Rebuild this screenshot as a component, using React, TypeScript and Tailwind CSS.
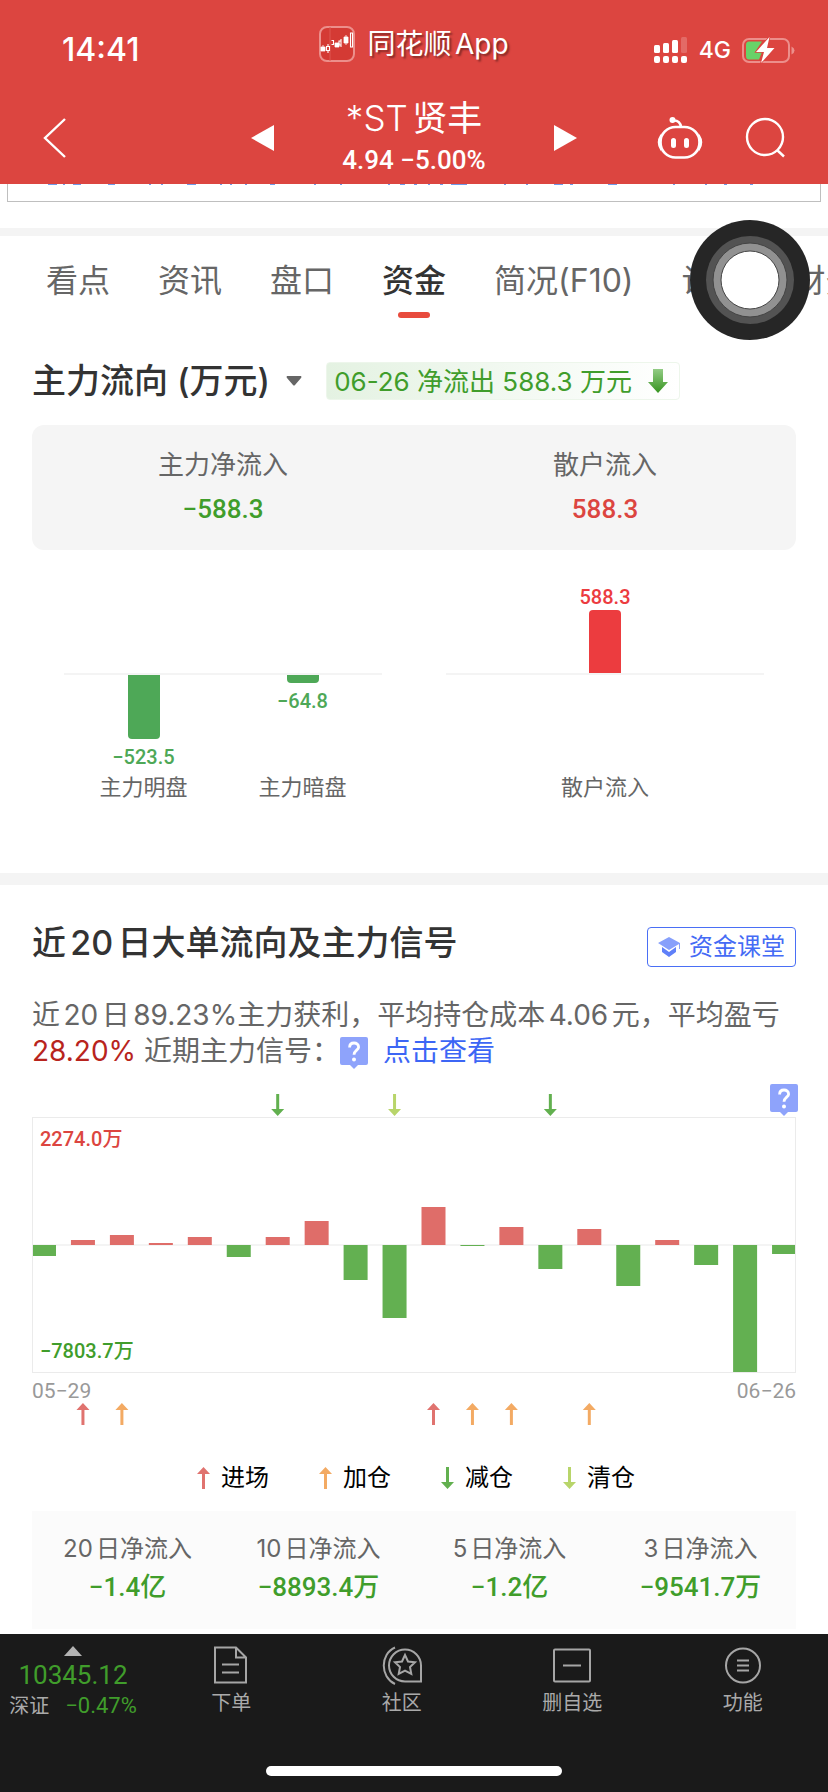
import React from "react";

const CJK = "font-['Inter','Noto_Sans_CJK_SC',sans-serif]";
const DIN = "font-['Roboto','Noto_Sans_CJK_SC',sans-serif]";

const tabs = ["看点", "资讯", "盘口", "资金", "简况(F10)", "诊股", "财务"];

const flow = [-11, 5, 10, 2, 8, -12, 8, 24, -35, -73, 38, -1, 18, -24, 16, -41, 5, -20, -127, -9];

const RED = "#e0736f";
const ORANGE = "#f3aa63";
const GREEN = "#62b04f";
const LIME = "#b8d56a";

const topSignals = [
  { day: 6, color: GREEN },
  { day: 9, color: LIME },
  { day: 13, color: GREEN },
];
const bottomSignals = [
  { day: 1, color: RED },
  { day: 2, color: ORANGE },
  { day: 10, color: RED },
  { day: 11, color: ORANGE },
  { day: 12, color: ORANGE },
  { day: 14, color: ORANGE },
];

const legend = [
  { label: "进场", color: RED, up: true },
  { label: "加仓", color: ORANGE, up: true },
  { label: "减仓", color: GREEN, up: false },
  { label: "清仓", color: LIME, up: false },
];

const totals = [
  { label: "20日净流入", value: "−1.4亿" },
  { label: "10日净流入", value: "−8893.4万" },
  { label: "5日净流入", value: "−1.2亿" },
  { label: "3日净流入", value: "−9541.7万" },
];

const UP = "M0 7 L6.5 0 L13 7 H8 V22 H5 V7 Z";
const DOWN = "M0 15 L6.5 22 L13 15 H8 V0 H5 V15 Z";

function Arrow({ up, color }: { up: boolean; color: string }) {
  return (
    <svg width="13" height="22" viewBox="0 0 13 22" aria-hidden="true">
      <path d={up ? UP : DOWN} fill={color} />
    </svg>
  );
}

function SignalRow({ items, up }: { items: { day: number; color: string }[]; up: boolean }) {
  return (
    <svg className="block h-[22px] w-full" viewBox="0 0 764 22" aria-hidden="true">
      {items.map((s) => (
        <path key={s.day} d={up ? UP : DOWN} fill={s.color} transform={`translate(${5.5 + s.day * 38.95} 0)`} />
      ))}
    </svg>
  );
}

function Hint({ className = "" }: { className?: string }) {
  return (
    <button type="button" aria-label="说明" className={`inline-block h-8 w-7 ${className}`}>
      <svg width="28" height="32" viewBox="0 0 28 32" aria-hidden="true">
        <path d="M2 0H26Q28 0 28 2V26Q28 28 26 28H18L14 32L10 28H2Q0 28 0 26V2Q0 0 2 0Z" fill="#8ea3fb" />
        <path d="M9.6 10.5C9.6 7.6 11.4 6 14 6S18.6 7.6 18.6 10.2C18.6 13 14 13.6 14 17.8" fill="none" stroke="#fff" strokeWidth="2.8" />
        <circle cx="14" cy="22.6" r="2" fill="#fff" />
      </svg>
    </button>
  );
}

function StatusBar() {
  return (
    <div className="grid grid-cols-3 items-center pt-6">
      <div className="pt-2 pl-[62px] text-[32px] leading-9 font-medium">14:41</div>
      <div className="flex items-center justify-center gap-3 pb-1">
        <svg width="36" height="36" viewBox="0 0 36 36" aria-hidden="true">
          <rect x="1" y="1" width="34" height="34" rx="7" fill="#d43a34" stroke="#ec8f8b" strokeWidth="2" />
          <path d="M11 1V35" stroke="#dd5751" />
          <path d="M2 21h4v4H2zM4 19v3M16 17h4v4h-4zM25 11h4v6h-4zM27 9v10" fill="#fff" stroke="#fff" strokeWidth=".8" />
          <path d="M7.500 20.500h3v4h-3zM9 18v2M9 25v2M12.500 14.500h2v4h-2M22 15h-2v4h2M22 13v8M31.500 7v14h2v-14z" fill="none" stroke="#fff" strokeWidth="1.1" />
        </svg>
        <span className="text-[28px] leading-9 whitespace-nowrap [text-autospace:normal] [text-shadow:2px_2px_2px_rgba(0,0,0,0.4)]">同花顺App</span>
      </div>
      <div className="flex items-center justify-end gap-[11px] pt-2 pr-[33px]">
        <svg width="34" height="27" viewBox="0 0 34 27" fill="#fff" aria-hidden="true">
          <rect x="0" y="8" width="6" height="8" rx="1.500" />
          <rect x="9" y="6" width="6" height="10" rx="1.500" />
          <rect x="18" y="3" width="6" height="13" rx="1.500" />
          <rect x="27" y="0" width="6" height="16" rx="1.500" opacity=".2" />
          <rect x="0" y="19" width="6" height="7" rx="2" />
          <rect x="9" y="19" width="6" height="7" rx="2" />
          <rect x="18" y="19" width="6" height="7" rx="2" />
          <rect x="27" y="19" width="6" height="7" rx="2" />
        </svg>
        <span className="text-[23px] leading-8 font-medium">4G</span>
        <svg width="53" height="27" viewBox="0 0 53 27" aria-hidden="true">
          <rect x="1" y="2" width="46" height="23" rx="6" fill="none" stroke="#ec8f8b" strokeWidth="2" />
          <path d="M49.500 9.500Q52.500 11 52.500 13.500T49.500 17.500Z" fill="#ec8f8b" />
          <path d="M7 4.500H20L13 15H20L17 22.500H7Q4 22.500 4 19V8Q4 4.500 7 4.500Z" fill="#68d268" />
          <path d="M27.500 0L14 15H22L19 26L32.500 11H25Z" fill="#fff" stroke="#dc4540" strokeWidth="1.500" paintOrder="stroke" />
        </svg>
      </div>
    </div>
  );
}

function Header() {
  return (
    <header className="h-[184px] bg-[#dc4540] text-white">
      <StatusBar />
      <div className="grid grid-cols-[1fr_auto_1fr] items-center pt-7">
        <button type="button" aria-label="返回" className="ml-[43px] w-6">
          <svg width="24" height="40" viewBox="0 0 24 40" fill="none" stroke="#fff" strokeWidth="2.400" aria-hidden="true">
            <path d="M22 1L2 20L22 39" />
          </svg>
        </button>
        <div className="flex w-[326px] items-center justify-between">
          <button type="button" aria-label="上一只">
            <svg width="23" height="26" viewBox="0 0 23 26" aria-hidden="true"><path d="M0 13L23 0V26Z" fill="#fff" /></svg>
          </button>
          <div className="text-center">
            <h1 className="text-[35px] leading-[44px] whitespace-nowrap [text-autospace:normal]"><span className="font-light">*ST</span>贤丰</h1>
            <p className={`${DIN} text-[26px] leading-10 font-medium whitespace-nowrap`}>4.94 −5.00%</p>
          </div>
          <button type="button" aria-label="下一只">
            <svg width="23" height="26" viewBox="0 0 23 26" aria-hidden="true"><path d="M23 13L0 0V26Z" fill="#fff" /></svg>
          </button>
        </div>
        <div className="flex items-center justify-end gap-[42px] pr-[43px]">
          <button type="button" aria-label="智能助手">
            <svg width="46" height="44" viewBox="0 0 46 44" fill="none" stroke="#fff" strokeWidth="2.600" aria-hidden="true">
              <rect x="3.500" y="11" width="39" height="30.500" rx="15" />
              <path d="M16 4.500Q23 4 24 11" />
              <circle cx="15.500" cy="4" r="3" fill="#fff" stroke="none" />
              <path d="M3.500 20Q-.500 26 3.500 33ZM42.500 20Q46.500 26 42.500 33Z" fill="#fff" strokeWidth="1.500" />
              <path d="M16.500 24.500V29.500M29.500 24.500V29.500" strokeWidth="5" strokeLinecap="round" />
            </svg>
          </button>
          <button type="button" aria-label="搜索">
            <svg width="40" height="42" viewBox="0 0 40 42" fill="none" stroke="#fff" strokeWidth="2.400" aria-hidden="true">
              <circle cx="20" cy="20" r="18" />
              <path d="M32 33L39 39.500" />
            </svg>
          </button>
        </div>
      </div>
    </header>
  );
}

function Tabs() {
  return (
    <nav className="flex gap-12 overflow-hidden pt-5 pl-[46px] text-[32px] leading-[50px] text-[#666]">
      {tabs.map((t) => (
        <a key={t} href="#" className={t === "资金" ? "shrink-0 font-medium text-[#333]" : "shrink-0"}>
          {t}
          <span className={t === "资金" ? "mx-auto mt-[6px] block h-[6px] w-8 rounded-[3px] bg-[#e84b3d]" : "mt-[6px] block h-[6px]"} />
        </a>
      ))}
    </nav>
  );
}

function MainFlow() {
  return (
    <section className="px-8 pt-[39px]">
      <div className="flex items-center">
        <button type="button" className="flex items-center text-[#333]">
          <h2 className="text-[34px] leading-[48px] font-medium whitespace-nowrap [text-autospace:normal]">主力流向 (万元)</h2>
          <svg className="ml-4" width="16" height="10" viewBox="0 0 16 10" aria-hidden="true"><path d="M1 0H15Q16 1 15 2L9 9Q8 10 7 9L1 2Q0 1 1 0Z" fill="#666" /></svg>
        </button>
        <div className="ml-6 flex h-[38px] items-center gap-4 rounded border border-[#edf6eb] bg-linear-to-r from-[#e4f2e2] to-white px-[7px] text-[26px] whitespace-nowrap text-[#409d2b]">
          06-26 净流出 588.3 万元
          <svg className="mr-1" width="20" height="24" viewBox="0 0 20 24" aria-hidden="true">
            <defs>
              <linearGradient id="drop" x1="0" y1="0" x2="0" y2="1">
                <stop offset="0" stopColor="#93cc85" />
                <stop offset="1" stopColor="#36941f" />
              </linearGradient>
            </defs>
            <path d="M5 0H15V13H20L10 24L0 13H5Z" fill="url(#drop)" />
          </svg>
        </div>
      </div>

      <dl className="mt-5 grid h-[125px] grid-cols-2 rounded-xl bg-[#f5f5f5] pt-5 text-center">
        <div>
          <dt className="text-[26px] leading-10 text-[#666]">主力净流入</dt>
          <dd className={`${DIN} mt-1 text-[26px] leading-10 font-medium text-[#409d2b]`}>−588.3</dd>
        </div>
        <div>
          <dt className="text-[26px] leading-10 text-[#666]">散户流入</dt>
          <dd className={`${DIN} mt-1 text-[26px] leading-10 font-medium text-[#dc4540]`}>588.3</dd>
        </div>
      </dl>

      <div className="mt-[34px] grid grid-cols-2 gap-16 px-8 text-center">
        <div className="grid grid-cols-2">
          <FlowBar value="−523.5" label="主力明盘" height={64} />
          <FlowBar value="−64.8" label="主力暗盘" height={8} />
        </div>
        <FlowBar value="588.3" label="散户流入" height={64} positive />
      </div>
    </section>
  );
}

function FlowBar({ value, label, height, positive = false }: { value: string; label: string; height: number; positive?: boolean }) {
  const text = <span className={`${DIN} text-[20px] leading-[26px] font-medium`}>{value}</span>;
  return (
    <div className="text-[#4ea857]">
      <div className="flex h-[91px] flex-col items-center justify-end border-b-2 border-[#f4f4f4] text-[#ec3c3f]">
        {positive && text}
        {positive && <div className="w-8 rounded-t bg-[#ec3c3f]" style={{ height }} />}
      </div>
      <div className="flex h-[96px] flex-col items-center gap-[5px]">
        {!positive && <div className="w-8 rounded-b bg-[#4ea857]" style={{ height }} />}
        {!positive && text}
      </div>
      <div className="text-[22px] leading-8 text-[#666]">{label}</div>
    </div>
  );
}

function Signals() {
  return (
    <section className="px-8 pt-[34px]">
      <div className="flex items-center justify-between">
        <h2 className="text-[34px] leading-[48px] font-medium whitespace-nowrap text-[#333] [text-autospace:normal]">近20日大单流向及主力信号</h2>
        <a href="#" className="mt-2 flex h-10 items-center gap-2 rounded border border-[#4a6ff5] px-[10px] text-[24px] whitespace-nowrap text-[#456bf5]">
          <svg width="23" height="20" viewBox="0 0 23 20" aria-hidden="true">
            <path d="M11 0L22 6V12H21V7L11 13L0 6Z" fill="#87a0fb" />
            <path d="M4 10L11 15L18 10V15L11 20L4 15Z" fill="#5f80f9" />
          </svg>
          资金课堂
        </a>
      </div>

      <p className="mt-[30px] text-[28px] leading-9 text-[#666] [text-autospace:normal]">
        近20日89.23%主力获利，平均持仓成本4.06元，平均盈亏
        <br />
        <span className="text-[#b8241d]">28.20%</span> 近期主力信号：
        <Hint className="-my-1 mr-[15px] align-middle" />
        <a href="#" className="text-[#3c66f5]">点击查看</a>
      </p>

      <div className="relative mt-[25px]">
        <SignalRow items={topSignals} up={false} />
        <div className="absolute -top-[10px] -right-[2px] flex"><Hint /></div>
      </div>
      <div className={`${DIN} mt-px grid text-[20px] leading-6 font-medium`}>
        <svg className="col-start-1 row-start-1 block h-auto w-full" viewBox="0 0 764 256" aria-label="近20日大单流向">
          <path d="M1 128H763" stroke="#f4f4f4" strokeWidth="2" />
          {flow.map((v, i) => (
            <rect key={i} x={i * 38.95} y={v > 0 ? 128 - v : 128} width="24" height={Math.abs(v)} fill={v > 0 ? "#df6d69" : "#63b051"} />
          ))}
          <rect x=".5" y=".5" width="763" height="255" fill="none" stroke="#ebebeb" />
        </svg>
        <div className="col-start-1 row-start-1 flex flex-col justify-between px-2 py-[10px]">
          <span className="text-[#dc4540]">2274.0万</span>
          <span className="text-[#409d2b]">−7803.7万</span>
        </div>
      </div>
      <div className={`${DIN} flex justify-between pt-[6px] text-[21px] leading-6 text-[#999]`}>
        <span>05−29</span>
        <span>06−26</span>
      </div>
      <SignalRow items={bottomSignals} up />

      <ul className="flex justify-center gap-[50px] pt-9 pl-1 text-[24px] leading-[34px] text-black">
        {legend.map((l) => (
          <li key={l.label} className="flex items-center gap-[11px]">
            <Arrow up={l.up} color={l.color} />
            {l.label}
          </li>
        ))}
      </ul>

      <dl className="mt-4 grid h-[118px] grid-cols-4 bg-[#fbfbfb] pt-5 text-center">
        {totals.map((t) => (
          <div key={t.label}>
            <dt className="text-[24px] leading-9 text-[#666] [text-autospace:normal]">{t.label}</dt>
            <dd className={`${DIN} text-[26px] leading-10 font-medium text-[#409d2b]`}>{t.value}</dd>
          </div>
        ))}
      </dl>
    </section>
  );
}

const actions = [
  {
    label: "下单",
    icon: (
      <>
        <path d="M4 1.500H25L35 11.500V36.500H4ZM25 1.500V11.500H35" />
        <path d="M11 18.500H28M11 26.500H28" />
      </>
    ),
  },
  {
    label: "社区",
    icon: (
      <>
        <path d="M23 3.500A16 16 0 0 0 23 35.500H39V19.500A16 16 0 0 0 23 3.500Z" />
        <path d="M13 1.500C-2 8 -2 31 13 38" />
        <path d="M23 9L26 15.500L33 16.300L28 21L29.300 28L23 24.600L16.700 28L18 21L13 16.300L20 15.500Z" />
      </>
    ),
  },
  {
    label: "删自选",
    icon: (
      <>
        <rect x="2" y="3.500" width="36" height="32" rx="1" />
        <path d="M11 19.500H29" />
      </>
    ),
  },
  {
    label: "功能",
    icon: (
      <>
        <circle cx="20" cy="19.500" r="17" />
        <path d="M14 14.500H26M14 19.500H26M14 24.500H26" />
      </>
    ),
  },
];

function BottomBar() {
  return (
    <footer className="grid h-[158px] grid-cols-[146px_repeat(4,1fr)] content-between bg-[#1a1a1a] pb-4">
      <button type="button" className="flex flex-col items-center pt-3">
        <svg width="18" height="10" viewBox="0 0 18 10" aria-hidden="true"><path d="M9 0L18 10H0Z" fill="#b3b3b3" /></svg>
        <span className={`${DIN} mt-[3px] text-[26px] leading-8 text-[#409d2b]`}>10345.12</span>
        <span className="flex items-center gap-4 text-[20px] leading-[30px] whitespace-nowrap text-[#aaa]">
          深证
          <span className={`${DIN} text-[22px] text-[#409d2b]`}>−0.47%</span>
        </span>
      </button>
      {actions.map((a) => (
        <button key={a.label} type="button" className="flex flex-col items-center pt-3 text-[20px] leading-[30px] text-[#aaa]">
          <svg width="40" height="40" viewBox="0 0 40 40" fill="none" stroke="#a6a6a6" strokeWidth="2" aria-hidden="true">{a.icon}</svg>
          <span className="pt-[2px]">{a.label}</span>
        </button>
      ))}
      <div className="col-span-5 mx-auto h-[10px] w-[296px] rounded-full bg-white" />
    </footer>
  );
}

export default function App() {
  return (
    <div className={`${CJK} relative flex min-h-screen flex-col bg-white`}>
      <Header />
      <div className="mx-[7px] h-[18px] border border-t-0 border-[#bfbfbf]">
        <svg className="block h-px w-full" viewBox="0 0 812 1" preserveAspectRatio="none" aria-hidden="true">
          <path
            d="M40 .5h9M55 .5h2M65 .5h8M100 .5h7M141 .5h2M153 .5h2M179 .5h9M212 .5h2M222 .5h2M237 .5h2M262 .5h5M306 .5h2M332 .5h2M380 .5h2M392 .5h5M406 .5h3M420 .5h2M432 .5h3M443 .5h16M496 .5h2M518 .5h2M546 .5h9M562 .5h3M600 .5h9M665 .5h2M697 .5h2M716 .5h3M742 .5h3"
            stroke="#6f9bea"
          />
        </svg>
      </div>
      <div className="mt-[26px] h-2 bg-[#f4f4f4]" />
      <Tabs />
      <MainFlow />
      <div className="mt-[70px] h-3 bg-[#f4f4f4]" />
      <Signals />
      <div className="mt-auto">
        <BottomBar />
      </div>
      <button type="button" aria-label="悬浮球" className="absolute top-[220px] right-[18px] h-[120px] w-[120px]">
        <svg width="120" height="120" viewBox="0 0 120 120" aria-hidden="true">
          <circle cx="60" cy="60" r="60" fill="#262626" />
          <circle cx="60" cy="60" r="44" fill="#535353" />
          <circle cx="60" cy="60" r="37" fill="#919191" stroke="#444" />
          <circle cx="60" cy="60" r="29" fill="#fff" stroke="#444" />
        </svg>
      </button>
    </div>
  );
}
